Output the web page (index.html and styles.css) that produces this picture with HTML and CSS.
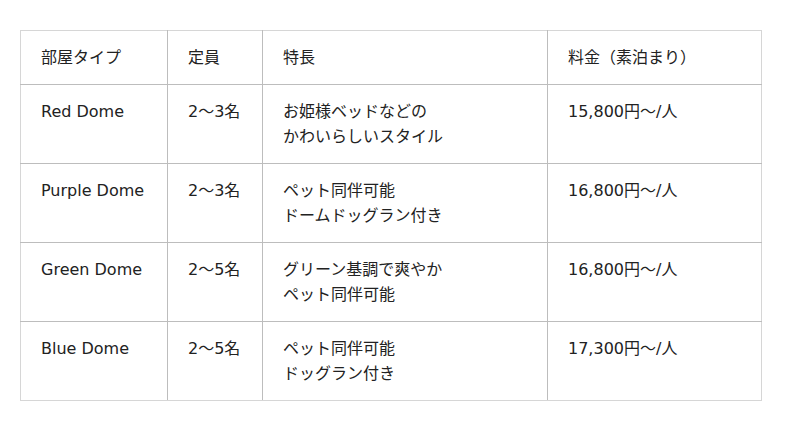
FILE: index.html
```html
<!DOCTYPE html>
<html lang="ja">
<head>
<meta charset="utf-8">
<link rel="stylesheet" href="styles.css">
</head>
<body>
<div class="wrap">
<table class="rooms">
  <colgroup>
    <col class="c1"><col class="c2"><col class="c3"><col class="c4">
  </colgroup>
  <thead>
    <tr><th>部屋タイプ</th><th>定員</th><th>特長</th><th>料金（素泊まり）</th></tr>
  </thead>
  <tbody>
    <tr><td>Red Dome</td><td>2〜3名</td><td>お姫様ベッドなどの<br>かわいらしいスタイル</td><td>15,800円〜/人</td></tr>
    <tr><td>Purple Dome</td><td>2〜3名</td><td>ペット同伴可能<br>ドームドッグラン付き</td><td>16,800円〜/人</td></tr>
    <tr><td>Green Dome</td><td>2〜5名</td><td>グリーン基調で爽やか<br>ペット同伴可能</td><td>16,800円〜/人</td></tr>
    <tr><td>Blue Dome</td><td>2〜5名</td><td>ペット同伴可能<br>ドッグラン付き</td><td>17,300円〜/人</td></tr>
  </tbody>
</table>
</div>
</body>
</html>
```

FILE: styles.css
```css
html, body { margin: 0; padding: 0; background: #fff; }
.wrap { padding: 30px 20px; }
.rooms {
  border-collapse: collapse;
  table-layout: fixed;
  width: 741px;
  font-family: "DejaVu Sans", "Noto Sans CJK JP", sans-serif;
  font-size: 16px;
  line-height: 25px;
  color: #222;
  border: 1px solid #d6d6d6;
}
.c1 { width: 147px; }
.c2 { width: 95px; }
.c3 { width: 285px; }
.c4 { width: 214px; }
.rooms th, .rooms td {
  border: 1px solid #bdbdbd;
  padding: 14px 20px;
  text-align: left;
  vertical-align: top;
  font-weight: normal;
}
.rooms tr:first-child th { border-top-color: #d6d6d6; }
.rooms tr:last-child td { border-bottom-color: #d6d6d6; }
.rooms th:first-child, .rooms td:first-child { border-left-color: #d6d6d6; }
.rooms th:last-child, .rooms td:last-child { border-right-color: #d6d6d6; }
```
